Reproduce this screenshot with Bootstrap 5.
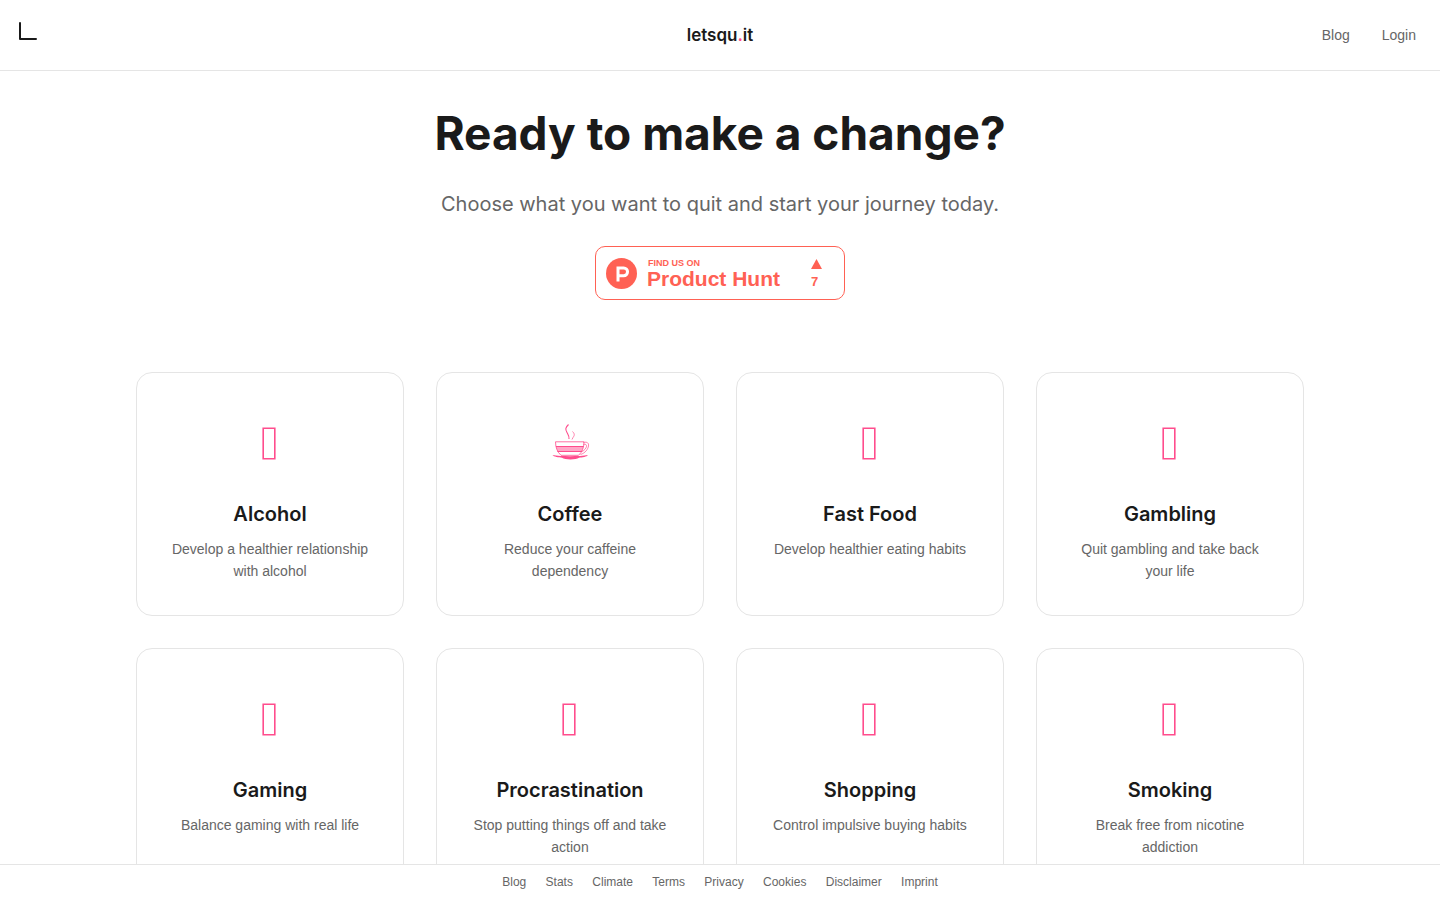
<!DOCTYPE html>
<html lang="en">
<head>
<meta charset="utf-8">
<meta name="viewport" content="width=device-width, initial-scale=1">
<title>letsqu.it</title>
<link href="https://cdn.jsdelivr.net/npm/bootstrap@5.3.0/dist/css/bootstrap.min.css" rel="stylesheet">
<style>
:root { --ink: #1a1a1a; --muted: #666; --line: #e5e5e5; --pink: #ff4d8d; --hunt: #ff6154; --display: Inter, "Liberation Sans", sans-serif; }
body { font-family: "Liberation Sans", Arial, sans-serif; font-size: 14px; line-height: 22px; color: var(--muted); background: #fff; padding-bottom: 68px; }
a { color: var(--muted); text-decoration: none; }
a:hover { color: var(--ink); }
.site-header { height: 71px; border-bottom: 1px solid var(--line); }
.home-link { color: var(--ink); }
.brand { font: 600 17px/24px var(--display); color: var(--ink); }
.brand span { color: var(--pink); }
.hero { padding-top: 32px; }
.hero-title { font: 700 46px/60px var(--display); color: var(--ink); }
.hero-text { font: 400 20px/35px var(--display); }
.hunt-badge { width: 250px; height: 54px; border: 1px solid var(--hunt); border-radius: 10px; color: var(--hunt); font-weight: 700; padding: 0 22px 0 10px; }
.hunt-badge:hover { color: var(--hunt); }
.hunt-words { margin-left: 10px; padding-top: 2px; }
.hunt-small { font-size: 9px; line-height: 10px; padding-left: 1px; }
.hunt-name { font-size: 21px; line-height: 22px; }
.hunt-votes { font-size: 13px; line-height: 10px; }
.page-wrap { max-width: 1200px; }
.habits { --bs-gutter-x: 32px; --bs-gutter-y: 32px; padding-top: 40px; margin-top: 0; }
.habit { border: 1px solid var(--line); border-radius: 16px; padding: 32px 32px 33px; color: var(--muted); }
.habit-icon { height: 76px; margin-bottom: 17px; color: var(--pink); }
.habit-title { font: 600 20px/32px var(--display); color: var(--ink); }
.site-footer { height: 36px; border-top: 1px solid var(--line); background: #fff; font-size: 12px; line-height: 35px; }
</style>
</head>
<body>
<svg class="d-none" aria-hidden="true">
  <symbol id="box" viewBox="0 0 16 34"><path d="M1.2 2.2h11.6v30.6H1.2z" fill="none" stroke="currentColor" stroke-width="1.6"/></symbol>
  <symbol id="cup" viewBox="0 0 40 40">
    <g fill="none" stroke="currentColor">
      <path d="M18.500 1.500c-3 3-3.500 4.500-1.500 8s2.500 4 2 6.500" stroke-width="1.100"/>
      <path d="M22.500 8.500c2.500 2.500 2 4 .5 6l-1 2" stroke-width=".700"/>
      <path d="M5.500 18.800h28.500c0 6-2 10.500-5.500 13.500h-17.500c-3.500-3-5.500-7.500-5.500-13.500z" stroke-width=".800"/>
      <path d="M33.500 19.500c3.500-1 5.500.5 5 3.500s-3 7-8 8.500" stroke-width=".700"/>
      <path d="M33.500 21.500c2-.7 3.200 0 3 1.800s-2 4.200-4.500 5.200" stroke-width=".700"/>
      <path d="M6 23.500h27.500M7.500 28.500h24.500" stroke-width="1.200"/>
    </g>
    <path d="M6 23.500h27.500l-1.500 5h-24.500z" fill="currentColor" opacity=".5"/>
    <path d="M2.500 32c8 1.600 27 1.600 35.500 0-1 1.800-6 2.500-9 2.700-3 2.300-14 2.300-17 0-3-.2-8.500-.9-9.500-2.700z" fill="currentColor"/>
  </symbol>
</svg>
<header class="site-header row g-0 align-items-center px-3">
  <div class="col d-flex"><a class="home-link d-flex" href="#" aria-label="Home"><svg width="24" height="32" viewBox="0 0 24 32"><path d="M4 4v16h16" fill="none" stroke="currentColor" stroke-width="2" stroke-linecap="round" stroke-linejoin="round"/></svg></a></div>
  <a class="brand col-auto" href="#">letsqu<span>.</span>it</a>
  <nav class="col d-flex justify-content-end"><a class="me-3 pe-3" href="#">Blog</a><a class="me-2" href="#">Login</a></nav>
</header>
<main class="page-wrap container-fluid px-3">
  <section class="hero text-center d-flex flex-column align-items-center">
    <h1 class="hero-title mb-4">Ready to make a change?</h1>
    <p class="hero-text mb-4">Choose what you want to quit and start your journey today.</p>
    <a class="hunt-badge d-flex align-items-center text-start" href="#">
      <svg width="31" height="31" viewBox="0 0 31 31" aria-hidden="true"><circle cx="15.500" cy="15.500" r="15.500" fill="currentColor"/><path d="M12 23.500V10h5.700a3.800 3.800 0 0 1 0 7.700H12" fill="none" stroke="#fff" stroke-width="3"/></svg>
      <span class="hunt-words d-flex flex-column me-auto"><span class="hunt-small">FIND US ON</span><span class="hunt-name">Product Hunt</span></span>
      <span class="hunt-votes d-flex flex-column gap-2"><svg width="11" height="10" viewBox="0 0 11 10" aria-hidden="true"><path d="M5.500 0L11 10H0z" fill="currentColor"/></svg><span>7</span></span>
    </a>
  </section>
  <section class="habits row row-cols-1 row-cols-sm-2 row-cols-lg-4">
    <div class="col"><a class="habit d-block h-100 text-center" href="#"><div class="habit-icon d-flex align-items-center justify-content-center"><svg width="16" height="34"><use href="#box"/></svg></div><h2 class="habit-title mb-2">Alcohol</h2><p class="mb-0">Develop a healthier relationship with alcohol</p></a></div>
    <div class="col"><a class="habit d-block h-100 text-center" href="#"><div class="habit-icon d-flex align-items-center justify-content-center"><svg width="40" height="40"><use href="#cup"/></svg></div><h2 class="habit-title mb-2">Coffee</h2><p class="mb-0">Reduce your caffeine dependency</p></a></div>
    <div class="col"><a class="habit d-block h-100 text-center" href="#"><div class="habit-icon d-flex align-items-center justify-content-center"><svg width="16" height="34"><use href="#box"/></svg></div><h2 class="habit-title mb-2">Fast Food</h2><p class="mb-0">Develop healthier eating habits</p></a></div>
    <div class="col"><a class="habit d-block h-100 text-center" href="#"><div class="habit-icon d-flex align-items-center justify-content-center"><svg width="16" height="34"><use href="#box"/></svg></div><h2 class="habit-title mb-2">Gambling</h2><p class="mb-0">Quit gambling and take back your life</p></a></div>
    <div class="col"><a class="habit d-block h-100 text-center" href="#"><div class="habit-icon d-flex align-items-center justify-content-center"><svg width="16" height="34"><use href="#box"/></svg></div><h2 class="habit-title mb-2">Gaming</h2><p class="mb-0">Balance gaming with real life</p></a></div>
    <div class="col"><a class="habit d-block h-100 text-center" href="#"><div class="habit-icon d-flex align-items-center justify-content-center"><svg width="16" height="34"><use href="#box"/></svg></div><h2 class="habit-title mb-2">Procrastination</h2><p class="mb-0">Stop putting things off and take action</p></a></div>
    <div class="col"><a class="habit d-block h-100 text-center" href="#"><div class="habit-icon d-flex align-items-center justify-content-center"><svg width="16" height="34"><use href="#box"/></svg></div><h2 class="habit-title mb-2">Shopping</h2><p class="mb-0">Control impulsive buying habits</p></a></div>
    <div class="col"><a class="habit d-block h-100 text-center" href="#"><div class="habit-icon d-flex align-items-center justify-content-center"><svg width="16" height="34"><use href="#box"/></svg></div><h2 class="habit-title mb-2">Smoking</h2><p class="mb-0">Break free from nicotine addiction</p></a></div>
  </section>
</main>
<footer class="site-footer fixed-bottom text-center">
  <a class="mx-2" href="#">Blog</a>
  <a class="mx-2" href="#">Stats</a>
  <a class="mx-2" href="#">Climate</a>
  <a class="mx-2" href="#">Terms</a>
  <a class="mx-2" href="#">Privacy</a>
  <a class="mx-2" href="#">Cookies</a>
  <a class="mx-2" href="#">Disclaimer</a>
  <a class="mx-2" href="#">Imprint</a>
</footer>
<script src="https://cdn.jsdelivr.net/npm/bootstrap@5.3.0/dist/js/bootstrap.bundle.min.js"></script>
</body>
</html>
